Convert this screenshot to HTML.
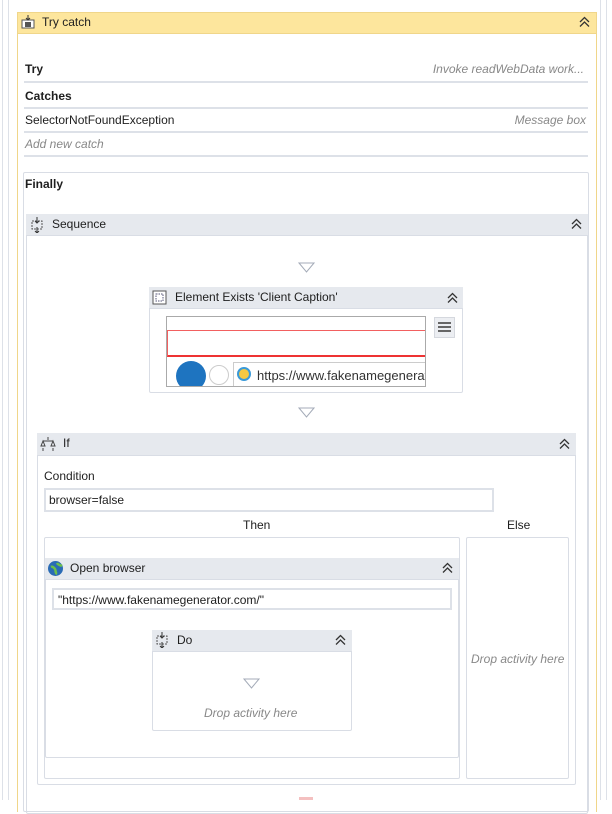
<!DOCTYPE html>
<html><head><meta charset="utf-8"><style>
body{margin:0;width:612px;height:800px;overflow:hidden;background:#fff;font-family:"Liberation Sans",sans-serif;font-size:12px;color:#1e1e1e;position:relative}
.a{position:absolute;box-sizing:border-box}
.b{border:1px solid #d9dde5;border-radius:2px}
.h{background:#e6e9ee;border-bottom:1px solid #d9dde5}
.t{position:absolute;white-space:nowrap}
.i{font-style:italic;color:#888}
.ln{position:absolute;height:2px;background:#dde1e8}
.cv{position:absolute}
</style></head><body>
<div class="a" style="left:2px;top:0;width:1px;height:800px;background:#dde1e8"></div>
<div class="a" style="left:8px;top:0;width:1px;height:800px;background:#dde1e8"></div>
<div class="a" style="left:600px;top:0;width:1px;height:800px;background:#dde1e8"></div>
<div class="a" style="left:606px;top:0;width:1px;height:800px;background:#dde1e8"></div>

<div class="a" style="left:17px;top:12px;width:580px;height:800px;border:1px solid #f0d68a;border-bottom:none"></div>
<div class="a" style="left:17px;top:12px;width:580px;height:22px;background:#fde69d;border:1px solid #f0d68a"></div>
<svg class="a" style="left:21px;top:15px" width="14" height="14"><rect x="1" y="5" width="12" height="8" fill="#fff" stroke="#555"/><rect x="4" y="7" width="6" height="5" fill="#555"/><path d="M7 0v5M5 3l2 2 2-2" stroke="#333" fill="none"/></svg>
<div class="t" style="left:42px;top:15px">Try catch</div>
<svg class="cv" style="left:579px;top:16px" width="11" height="12"><path d="M1 6l4.5-4.5L10 6M1 10.5l4.5-4.5L10 10.5" stroke="#333" stroke-width="1.3" fill="none"/></svg>

<div class="t" style="left:25px;top:62px;font-weight:bold">Try</div>
<div class="t i" style="right:28px;top:62px">Invoke readWebData work...</div>
<div class="ln" style="left:24px;top:81px;width:564px"></div>
<div class="t" style="left:25px;top:89px;font-weight:bold">Catches</div>
<div class="ln" style="left:24px;top:107px;width:564px"></div>
<div class="t" style="left:25px;top:113px">SelectorNotFoundException</div>
<div class="t i" style="right:26px;top:113px">Message box</div>
<div class="ln" style="left:24px;top:131px;width:564px"></div>
<div class="t i" style="left:25px;top:137px">Add new catch</div>
<div class="ln" style="left:24px;top:155px;width:564px"></div>

<div class="a b" style="left:23px;top:172px;width:566px;height:640px"></div>
<div class="t" style="left:25px;top:177px;font-weight:bold">Finally</div>

<div class="a b" style="left:26px;top:214px;width:562px;height:600px"></div>
<div class="a h" style="left:26px;top:214px;width:562px;height:22px"></div>
<svg class="a" style="left:30px;top:217px" width="14" height="16"><rect x="2" y="4" width="10" height="8" fill="none" stroke="#555" stroke-dasharray="2 1"/><path d="M7 0v6M7 10v6M5 4l2 2 2-2M5 14l2 2 2-2" stroke="#333" fill="none"/></svg>
<div class="t" style="left:52px;top:217px">Sequence</div>
<svg class="cv" style="left:571px;top:218px" width="11" height="12"><path d="M1 6l4.5-4.5L10 6M1 10.5l4.5-4.5L10 10.5" stroke="#333" stroke-width="1.3" fill="none"/></svg>

<svg class="a" style="left:298px;top:262px" width="17" height="11"><path d="M1 1h15l-7.5 9z" fill="none" stroke="#a4abb8"/></svg>

<div class="a b" style="left:149px;top:287px;width:314px;height:106px"></div>
<div class="a h" style="left:149px;top:287px;width:314px;height:22px"></div>
<svg class="a" style="left:152px;top:290px" width="15" height="15"><rect x="1" y="1" width="13" height="13" fill="#fff" stroke="#555"/><rect x="4" y="4" width="7" height="7" fill="none" stroke="#557" stroke-dasharray="1.5 1"/></svg>
<div class="t" style="left:175px;top:290px">Element Exists 'Client Caption'</div>
<svg class="cv" style="left:447px;top:292px" width="11" height="12"><path d="M1 6l4.5-4.5L10 6M1 10.5l4.5-4.5L10 10.5" stroke="#333" stroke-width="1.3" fill="none"/></svg>
<div class="a" style="left:166px;top:316px;width:260px;height:71px;border:1px solid #aaa;overflow:hidden;background:#fff">
 <div class="a" style="left:0;top:13px;width:260px;height:27px;border:1px solid #f26060;border-bottom:2px solid #e33"></div>
 <div class="a" style="left:9px;top:44px;width:30px;height:30px;border-radius:50%;background:#1e74c0"></div>
 <div class="a" style="left:42px;top:48px;width:20px;height:20px;border-radius:50%;border:1px solid #ccc"></div>
 <div class="a" style="left:66px;top:45px;width:200px;height:30px;border:1px solid #ccc"></div>
 <div class="a" style="left:70px;top:50px;width:14px;height:14px;border-radius:50%;border:2px solid #3a9ad9;background:#f5c842"></div>
 <div class="t" style="left:90px;top:51px;font-size:13px;color:#333">https://www.fakenamegenerato</div>
</div>
<div class="a" style="left:434px;top:317px;width:21px;height:21px;background:#eceef2;border:1px solid #d5d8de"></div>
<div class="a" style="left:438px;top:322px;width:13px;height:2px;background:#666;box-shadow:0 4px 0 #666,0 8px 0 #666"></div>

<svg class="a" style="left:298px;top:407px" width="17" height="11"><path d="M1 1h15l-7.5 9z" fill="none" stroke="#a4abb8"/></svg>

<div class="a b" style="left:37px;top:433px;width:539px;height:352px"></div>
<div class="a h" style="left:37px;top:433px;width:539px;height:23px"></div>
<svg class="a" style="left:40px;top:436px" width="16" height="16"><path d="M8 1v3M3 5h10M3 5l-2 5h4zM13 5l-2 5h4z" stroke="#444" fill="none"/><path d="M3 12v3M13 12v3" stroke="#444"/></svg>
<div class="t" style="left:63px;top:436px">If</div>
<svg class="cv" style="left:559px;top:438px" width="11" height="12"><path d="M1 6l4.5-4.5L10 6M1 10.5l4.5-4.5L10 10.5" stroke="#333" stroke-width="1.3" fill="none"/></svg>
<div class="t" style="left:44px;top:469px">Condition</div>
<div class="a" style="left:44px;top:488px;width:450px;height:24px;border:2px solid #dde1e8"></div>
<div class="t" style="left:49px;top:493px">browser=false</div>
<div class="t" style="left:243px;top:518px">Then</div>
<div class="t" style="left:507px;top:518px">Else</div>
<div class="a b" style="left:44px;top:537px;width:416px;height:242px"></div>
<div class="a b" style="left:466px;top:537px;width:103px;height:242px"></div>
<div class="t i" style="left:471px;top:652px">Drop activity here</div>

<div class="a b" style="left:45px;top:558px;width:414px;height:200px"></div>
<div class="a h" style="left:45px;top:558px;width:414px;height:22px"></div>
<svg class="a" style="left:47px;top:560px" width="17" height="17"><circle cx="8.5" cy="8.5" r="7.5" fill="#2a6bb5"/><path d="M4 7c2-1 3 1 4 2s0 4 2 5M10 3c1 2 3 2 5 3" stroke="#6cc04a" stroke-width="2.5" fill="none"/></svg>
<div class="t" style="left:70px;top:561px">Open browser</div>
<svg class="cv" style="left:442px;top:562px" width="11" height="12"><path d="M1 6l4.5-4.5L10 6M1 10.5l4.5-4.5L10 10.5" stroke="#333" stroke-width="1.3" fill="none"/></svg>
<div class="a" style="left:52px;top:588px;width:400px;height:22px;border:2px solid #dde1e8"></div>
<div class="t" style="left:58px;top:593px">"https://www.fakenamegenerator.com/"</div>

<div class="a b" style="left:152px;top:630px;width:200px;height:101px"></div>
<div class="a h" style="left:152px;top:630px;width:200px;height:22px"></div>
<svg class="a" style="left:155px;top:632px" width="14" height="16"><rect x="2" y="4" width="10" height="8" fill="none" stroke="#555" stroke-dasharray="2 1"/><path d="M7 0v6M7 10v6M5 4l2 2 2-2M5 14l2 2 2-2" stroke="#333" fill="none"/></svg>
<div class="t" style="left:177px;top:633px">Do</div>
<svg class="cv" style="left:335px;top:634px" width="11" height="12"><path d="M1 6l4.5-4.5L10 6M1 10.5l4.5-4.5L10 10.5" stroke="#333" stroke-width="1.3" fill="none"/></svg>
<svg class="a" style="left:243px;top:678px" width="17" height="11"><path d="M1 1h15l-7.5 9z" fill="none" stroke="#a4abb8"/></svg>
<div class="t i" style="left:204px;top:706px">Drop activity here</div>

<div class="a" style="left:299px;top:797px;width:14px;height:3px;background:#f4c0c0"></div>
</body></html>
